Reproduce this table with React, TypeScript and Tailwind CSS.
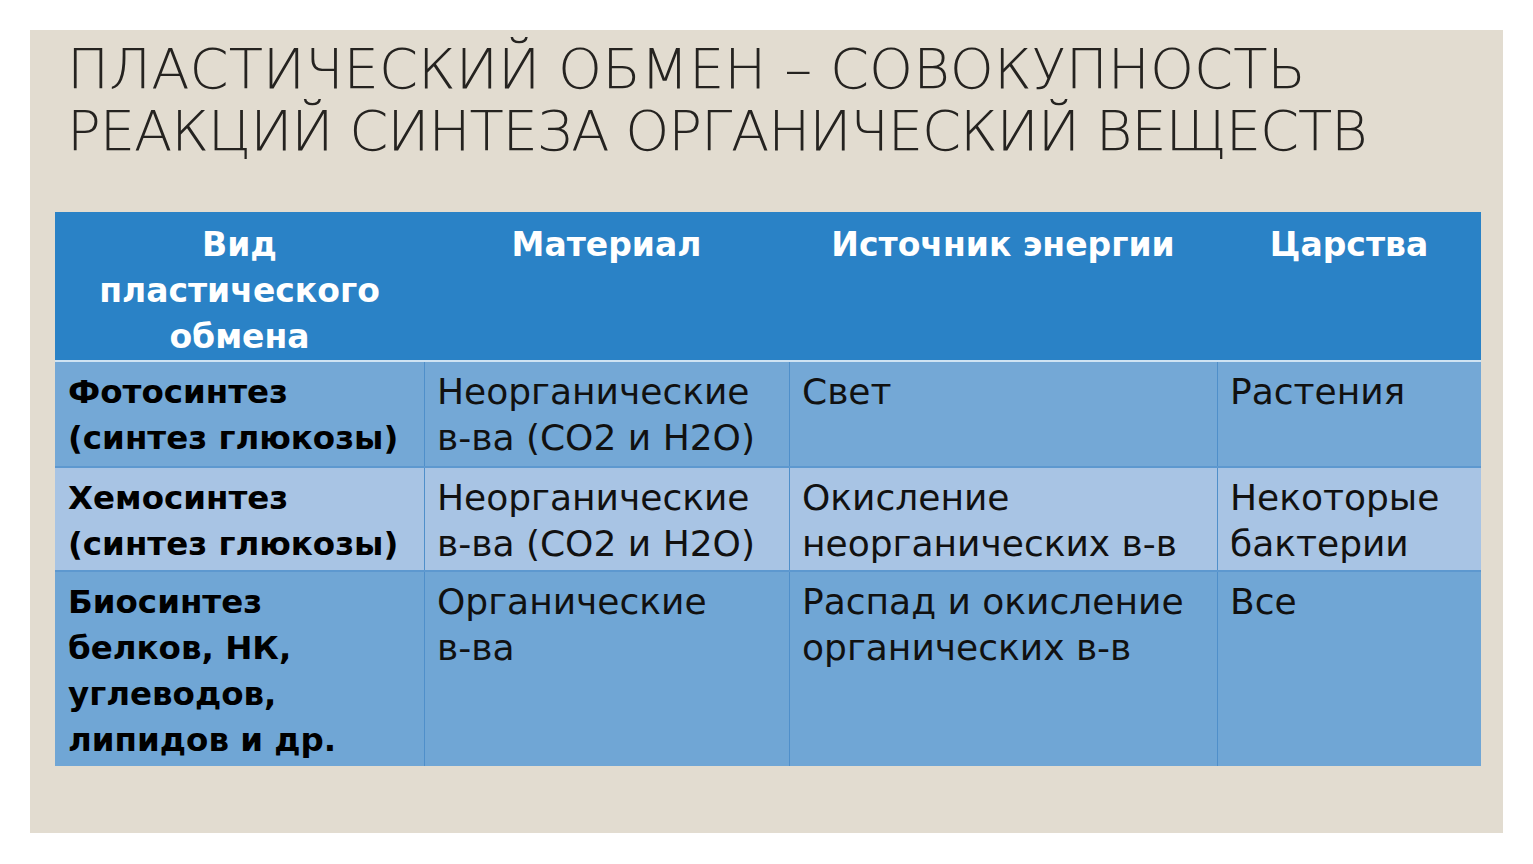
const rows = [
  {
    kind: ['Фотосинтез', '(синтез глюкозы)'],
    material: ['Неорганические', 'в-ва (CO2 и H2O)'],
    source: ['Свет'],
    kingdom: ['Растения'],
    bg: 'bg-[#74a8d6]',
    h: 'h-[104px]',
  },
  {
    kind: ['Хемосинтез', '(синтез глюкозы)'],
    material: ['Неорганические', 'в-ва (CO2 и H2O)'],
    source: ['Окисление', 'неорганических в-в'],
    kingdom: ['Некоторые', 'бактерии'],
    bg: 'bg-[#a8c4e4]',
    h: 'h-[104px]',
  },
  {
    kind: ['Биосинтез', 'белков, НК,', 'углеводов,', 'липидов и др.'],
    material: ['Органические', 'в-ва'],
    source: ['Распад и окисление', 'органических в-в'],
    kingdom: ['Все'],
    bg: 'bg-[#70a6d5]',
    h: 'h-[196px]',
  },
]

function Lines({ lines }: { lines: string[] }) {
  return (
    <>
      {lines.map((l, i) => (
        <div key={i} className="whitespace-nowrap">
          {l}
        </div>
      ))}
    </>
  )
}

export default function App() {
  return (
    <div className="w-[1533px] h-[864px] bg-white pt-[30px] pl-[30px]" style={{ fontFamily: '"DejaVu Sans", sans-serif' }}>
      <div className="w-[1473px] h-[803px] bg-[#e2dcd0] flex flex-col">
        {/* title */}
        <div className="pl-[37px] pt-[8px] h-[182px] text-[#252320] font-light text-[56px] leading-[62px]">
          <div className="whitespace-nowrap">ПЛАСТИЧЕСКИЙ ОБМЕН – СОВОКУПНОСТЬ</div>
          <div className="whitespace-nowrap tracking-[-1.1px]">РЕАКЦИЙ СИНТЕЗА ОРГАНИЧЕСКИЙ ВЕЩЕСТВ</div>
        </div>

        {/* table */}
        <div className="ml-[25px] w-[1426px] flex flex-col">
          <div className="h-[150px] bg-[#2a82c6] grid grid-cols-[369px_365px_428px_264px] text-white font-bold text-[33px] leading-[46px] text-center border-b-2 border-[#cfe3f3]">
            <div className="pt-[10px]">
              <Lines lines={['Вид', 'пластического', 'обмена']} />
            </div>
            <div className="pt-[10px]">Материал</div>
            <div className="pt-[10px]">Источник энергии</div>
            <div className="pt-[10px]">Царства</div>
          </div>
          {rows.map((r, i) => (
            <div
              key={i}
              className={`${r.bg} ${r.h} grid grid-cols-[369px_365px_428px_264px] text-[36px] leading-[46px] text-[#111] ${i > 0 ? 'border-t-2 border-[#5d98cf]' : ''}`}
            >
              <div className="pl-[13px] pt-[7px] font-bold text-[32.5px] text-black">
                <Lines lines={r.kind} />
              </div>
              <div className="pl-[12px] pt-[7px] border-l border-[#4f8fca]">
                <Lines lines={r.material} />
              </div>
              <div className="pl-[12px] pt-[7px] border-l border-[#4f8fca]">
                <Lines lines={r.source} />
              </div>
              <div className="pl-[12px] pt-[7px] border-l border-[#4f8fca]">
                <Lines lines={r.kingdom} />
              </div>
            </div>
          ))}
        </div>
      </div>
    </div>
  )
}
